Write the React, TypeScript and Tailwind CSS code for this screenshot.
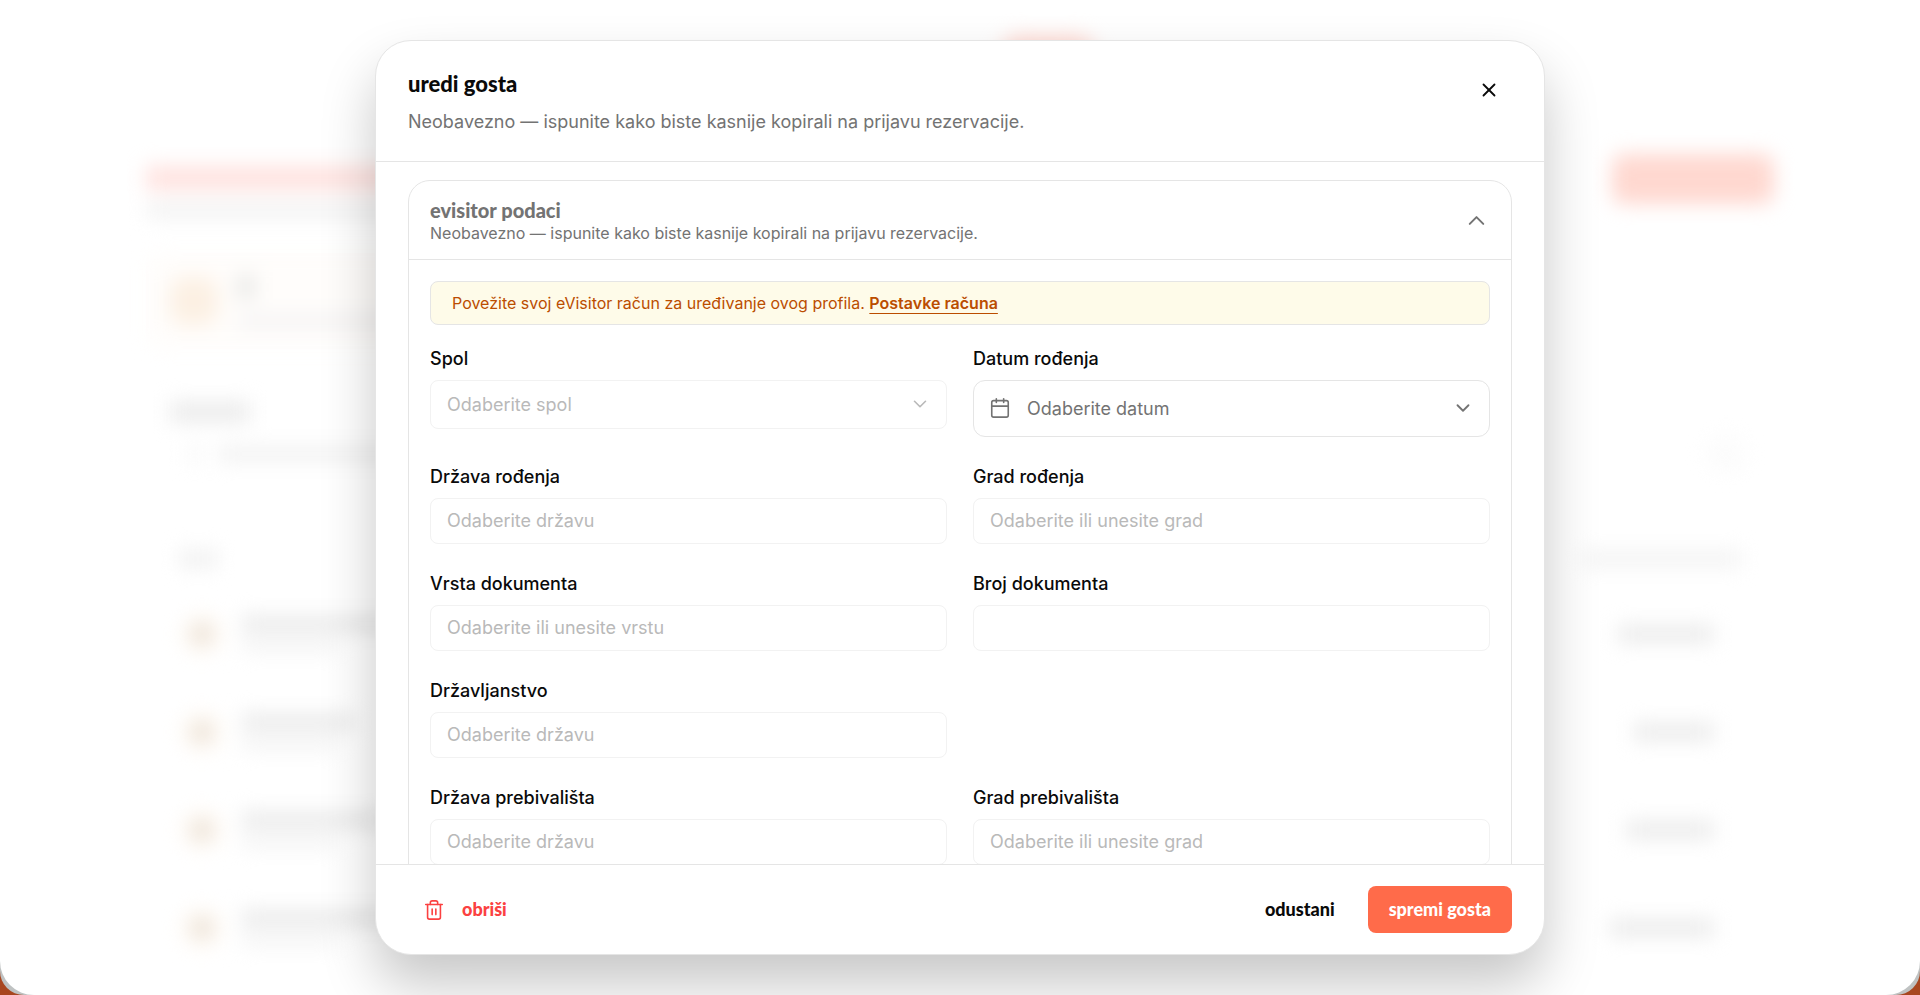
import React from 'react';
import { Calendar, ChevronDown, ChevronUp, Trash2, X } from 'lucide-react';

interface FieldProps {
  id: string;
  label: string;
  children: React.ReactNode;
}

const Field: React.FC<FieldProps> = ({ id, label, children }) => (
  <div>
    <label htmlFor={id} className="block mb-2 text-[18px] leading-[26px] font-medium text-neutral-950">{label}</label>
    {children}
  </div>
);

const TextField: React.FC<{ id: string; label: string; placeholder?: string }> = ({ id, label, placeholder }) => (
  <Field id={id} label={label}>
    <input
      id={id}
      type="text"
      disabled
      placeholder={placeholder}
      className="block w-full h-[46px] px-4 rounded-lg border border-[#f2f2f2] bg-white text-[18px] placeholder:text-[#b9b9b9]"
    />
  </Field>
);

const guests = [
  { id: 1, name: 'w-40', detail: 'w-24', total: 'w-24' },
  { id: 2, name: 'w-28', detail: 'w-24', total: 'w-20' },
  { id: 3, name: 'w-36', detail: 'w-24', total: 'w-22' },
  { id: 4, name: 'w-40', detail: 'w-24', total: 'w-26' },
];

// Guest list behind the dialog, only visible through the blur
const GuestListBackdrop: React.FC = () => (
  <div aria-hidden="true" className="h-full px-[146px] blur-[10px]">
    <div className="flex justify-center pt-9 pl-44">
      <div className="w-24 h-10 rounded-full bg-[#ffd9d2]" />
    </div>
    <div className="flex items-start justify-between mt-[78px]">
      <div className="pt-3">
        <div className="w-96 h-6 bg-[#ffe2df]" />
        <div className="w-96 h-4 mt-3 bg-[#f2f2f2]" />
      </div>
      <div className="w-[162px] h-[50px] rounded-xl bg-[#ffd8d0]" />
    </div>
    <div className="flex items-center gap-5 w-[600px] mt-[35px] px-6 h-[96px] rounded-2xl bg-[#fffdfb]">
      <div className="w-12 h-12 rounded-2xl bg-[#fcf0e3]" />
      <div className="space-y-4">
        <div className="w-4 h-6 bg-[#e6e6e4]" />
        <div className="w-60 h-3 bg-[#f3f2f3]" />
      </div>
    </div>
    <div className="mt-[53px] ml-6 w-20 h-5 bg-[#ebebeb]" />
    <div className="flex items-center gap-4 mt-3 ml-10">
      <div className="w-4 h-4 bg-[#f8f8f8]" />
      <div className="w-52 h-4 bg-[#f2f2f2]" />
      <div className="w-10 h-10 ml-auto mr-7 rounded-full bg-[#fcfcfc]" />
    </div>
    <div className="flex justify-between mt-[77px] ml-8 mr-8">
      <div className="w-10 h-4 bg-[#f0f0f0]" />
      <div className="w-40 h-4 bg-[#f3f3f3]" />
    </div>
    <div className="mt-[18px] ml-9 mr-15">
      {guests.map((guest) => (
        <div key={guest.id} className="flex items-center gap-5 h-[98px]">
          <div className="flex items-center justify-center w-10 h-10 rounded-full bg-[#fef8f1]">
            <div className="w-4 h-4 bg-[#e4dace]" />
          </div>
          <div className="space-y-2">
            <div className={`${guest.name} h-4 bg-[#e9e9e9]`} />
            <div className={`${guest.detail} h-3 bg-[#f3f3f3]`} />
          </div>
          <div className={`${guest.total} h-4 ml-auto bg-[#e9e9e9]`} />
        </div>
      ))}
    </div>
  </div>
);

const EditGuestDialog: React.FC = () => (
  <div
    role="dialog"
    aria-labelledby="dialog-title"
    className="flex flex-col w-full max-w-[1170px] h-[92vh] overflow-hidden rounded-[36px] border border-[#e5e5e5] bg-white shadow-[0_30px_54px_rgba(0,0,0,0.22)]"
  >
    <header className="flex items-start justify-between px-8 py-[26px] border-b border-[#e5e5e5]">
      <div>
        <h2 id="dialog-title" className="mb-[7px] font-[Lato] text-[22px] leading-[34px] font-black text-neutral-950">uredi gosta</h2>
        <p className="text-[18px] leading-[27px] text-[#737373]">Neobavezno — ispunite kako biste kasnije kopirali na prijavu rezervacije.</p>
      </div>
      <button type="button" aria-label="Zatvori" className="flex items-center justify-center w-[46px] h-[46px] rounded-lg text-neutral-950">
        <X size={22} strokeWidth={2} />
      </button>
    </header>

    <main className="flex-1 min-h-0 overflow-hidden px-8 pt-[18px]">
      <section className="rounded-t-[22px] border border-[#e5e5e5]">
        <button type="button" aria-expanded="true" className="flex items-center justify-between w-full px-[21px] pt-[17px] pb-[15px] border-b border-[#e5e5e5] text-left text-[#737373]">
          <span className="block">
            <span className="block font-[Lato] text-[20px] leading-[24px] font-black">evisitor podaci</span>
            <span className="block text-[16px] leading-[22px]">Neobavezno — ispunite kako biste kasnije kopirali na prijavu rezervacije.</span>
          </span>
          <ChevronUp size={27} strokeWidth={1.75} />
        </button>

        <div className="px-[21px] pt-[21px] pb-6">
          <div className="px-[21px] py-[9px] rounded-lg border border-[#e5e5e5] bg-[#fefbe9] text-[16px] leading-[24px] text-[#bb4d00]">
            Povežite svoj eVisitor račun za uređivanje ovog profila.{' '}
            <a href="#postavke" className="font-semibold underline underline-offset-4">Postavke računa</a>
          </div>

          <div className="grid grid-cols-2 gap-x-[26px] gap-y-[27px] mt-[21px]">
            <Field id="spol" label="Spol">
              <div className="relative">
                <select
                  id="spol"
                  disabled
                  className="block w-full h-[49px] px-4 appearance-none rounded-lg border border-[#f2f2f2] bg-white text-[18px] text-[#b9b9b9] opacity-100"
                >
                  <option>Odaberite spol</option>
                </select>
                <ChevronDown size={22} strokeWidth={1.75} className="absolute right-4 inset-y-0 my-auto text-[#b9b9b9] pointer-events-none" />
              </div>
            </Field>
            <Field id="datum" label="Datum rođenja">
              <button id="datum" type="button" className="flex items-center w-full h-[57px] px-[15px] rounded-xl border border-[#e5e5e5] text-[18px] text-[#737373]">
                <Calendar size={22} strokeWidth={1.75} />
                <span className="ml-4">Odaberite datum</span>
                <ChevronDown size={22} strokeWidth={2} className="ml-auto" />
              </button>
            </Field>
            <TextField id="drzava-rodenja" label="Država rođenja" placeholder="Odaberite državu" />
            <TextField id="grad-rodenja" label="Grad rođenja" placeholder="Odaberite ili unesite grad" />
            <TextField id="vrsta-dokumenta" label="Vrsta dokumenta" placeholder="Odaberite ili unesite vrstu" />
            <TextField id="broj-dokumenta" label="Broj dokumenta" />
            <TextField id="drzavljanstvo" label="Državljanstvo" placeholder="Odaberite državu" />
            <div />
            <TextField id="drzava-prebivalista" label="Država prebivališta" placeholder="Odaberite državu" />
            <TextField id="grad-prebivalista" label="Grad prebivališta" placeholder="Odaberite ili unesite grad" />
          </div>
        </div>
      </section>
    </main>

    <footer className="flex items-center justify-between px-8 py-[21px] border-t border-[#e5e5e5] font-[Lato] text-[18px] font-black">
      <button type="button" className="flex items-center gap-[17px] h-[47px] px-[15px] rounded-lg text-[#fb4141]">
        <Trash2 size={22} strokeWidth={1.75} />
        obriši
      </button>
      <div className="flex items-center gap-3">
        <button type="button" className="h-[47px] px-[21px] rounded-lg text-neutral-950">odustani</button>
        <button type="button" className="h-[47px] px-[21px] rounded-lg bg-[#ff6b4a] text-white">spremi gosta</button>
      </div>
    </footer>
  </div>
);

const App: React.FC = () => (
  <div className="h-screen overflow-hidden bg-[#a8461f] font-[Inter,sans-serif]">
    <div className="h-full overflow-hidden rounded-b-[24px] bg-[#bfc2c2]">
      <div className="relative h-full overflow-hidden rounded-b-[34px] bg-white">
        <GuestListBackdrop />
        <div className="absolute inset-0 flex items-center justify-center">
          <EditGuestDialog />
        </div>
      </div>
    </div>
  </div>
);

export default App;
